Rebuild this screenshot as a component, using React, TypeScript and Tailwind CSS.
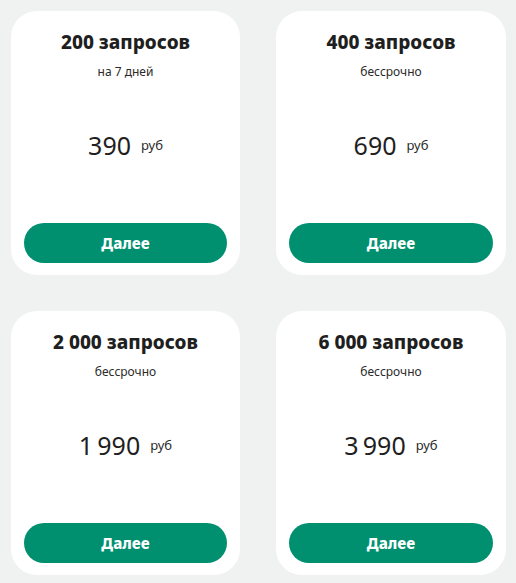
import React from "react";

const plans = [
  { title: "200 запросов", sub: "на 7 дней", price: "390" },
  { title: "400 запросов", sub: "бессрочно", price: "690" },
  { title: "2 000 запросов", sub: "бессрочно", price: "1\u202F990" },
  { title: "6 000 запросов", sub: "бессрочно", price: "3\u202F990" },
];

export default function App() {
  return (
    <div
      className="min-h-screen w-[516px] bg-[#f0f1f1] pt-[11px] pl-[11px]"
      style={{ fontFamily: '"Noto Sans", "Open Sans", sans-serif' }}
    >
      <div className="grid grid-cols-[229px_230px] gap-x-[36px] gap-y-[36px]">
        {plans.map((p) => (
          <div
            key={p.title}
            className="h-[264px] rounded-[26px] bg-white flex flex-col items-center px-[13px] pb-[12px]"
          >
            <div className="mt-[17px] h-[28px] leading-[28px] text-[19px] font-extrabold text-[#1f1f1f]">
              {p.title}
            </div>
            <div className="mt-[8px] h-[16px] leading-[16px] text-[12px] text-[#2a2a2a]">
              {p.sub}
            </div>
            <div className="mt-[48px] flex items-start h-[34px]">
              <span className="text-[25px] leading-[34px] text-[#1f1f1f]">{p.price}</span>
              <span className="ml-[10px] mt-[8px] text-[13px] leading-[18px] text-[#2a2a2a]">руб</span>
            </div>
            <div className="mt-auto w-full h-[40px] rounded-full bg-[#009070] flex items-center justify-center text-white font-extrabold text-[15px]">
              Далее
            </div>
          </div>
        ))}
      </div>
    </div>
  );
}
